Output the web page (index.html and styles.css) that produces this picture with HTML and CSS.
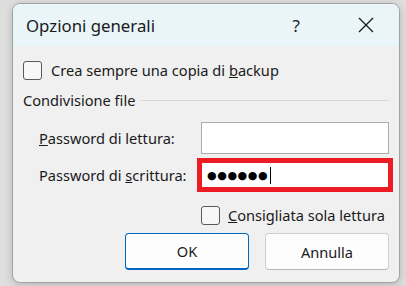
FILE: index.html
```
<!DOCTYPE html>
<html lang="it">
<head>
  <meta charset="UTF-8" />
  <title>Opzioni generali</title>
  <link rel="stylesheet" href="styles.css">
</head>
<body>
  <div class="dialog">
    <!-- Title bar -->
    <div class="titlebar">
      <span class="title">Opzioni generali</span>
      <span class="help">?</span>
      <svg class="close" width="16" height="16" viewBox="0 0 16 16">
        <path d="M1 1 L15 15 M15 1 L1 15" stroke="#1a1a1a" stroke-width="1.3" fill="none" />
      </svg>
    </div>

    <div class="content">
      <label class="check-row">
        <span class="checkbox"></span>
        <span>Crea sempre una copia di <u>b</u>ackup</span>
      </label>

      <div class="group-title">
        <span>Condivisione file</span>
        <span class="group-line"></span>
      </div>

      <div class="field-row">
        <span class="field-label"><u>P</u>assword di lettura:</span>
        <span class="field"></span>
      </div>

      <div class="field-row second">
        <span class="field-label">Password di <u>s</u>crittura:</span>
        <span class="field marked">
          <span class="dots">&#9679;&#9679;&#9679;&#9679;&#9679;&#9679;</span><span class="caret"></span>
        </span>
      </div>

      <label class="check-row readonly">
        <span class="checkbox"></span>
        <span><u>C</u>onsigliata sola lettura</span>
      </label>

      <div class="buttons">
        <button class="btn primary">OK</button>
        <button class="btn">Annulla</button>
      </div>
    </div>
  </div>
</body>
</html>
```

FILE: styles.css
```
body, html {
  margin: 0; padding: 0; height: 100%;
  font-family: 'Noto Sans', 'Open Sans', sans-serif;
  color: #1a1a1a;
  background: #dedede;
  overflow: hidden;
}
body {
  padding: 3px 0 0 12px;
  box-sizing: border-box;
}

.dialog {
  width: 388px;
  height: 280px;
  box-sizing: border-box;
  border: 1px solid #a3a3a3;
  border-radius: 8px;
  background: #f0f0f0;
  box-shadow: 0 2px 8px rgba(0, 0, 0, 0.18);
  overflow: hidden;
}

/* Title bar */
.titlebar {
  height: 42px;
  display: flex;
  align-items: center;
  background: #e9f5f8;
}
.title {
  margin-left: 13px;
  font-size: 16.8px;
  flex: 1;
}
.help {
  font-size: 17px;
  margin-right: 58px;
  color: #222;
}
.close {
  margin-right: 25px;
}

/* Body */
.content {
  padding: 0 10px;
  font-size: 14.6px;
}
.check-row {
  display: flex;
  align-items: center;
  gap: 9px;
  margin-top: 14px;
}
.checkbox {
  width: 17px;
  height: 17px;
  border: 1px solid #5a5a5a;
  border-radius: 3px;
  background: #f7f7f7;
}
.group-title {
  display: flex;
  align-items: center;
  gap: 6px;
  margin-top: 10px;
}
.group-line {
  flex: 1;
  height: 1px;
  background: #d9d9d9;
}

.field-row {
  display: flex;
  align-items: center;
  margin-top: 12px;
  padding-left: 16px;
}
.field-row.second {
  margin-top: 4px;
}
.field-label {
  flex: 1;
}
.field {
  width: 188px;
  height: 32px;
  box-sizing: border-box;
  border: 1px solid #adadad;
  background: #fff;
  display: flex;
  align-items: center;
}
.field.marked {
  width: 196px;
  height: 34px;
  margin-right: -4px;
  border: 5px solid #ec1c24;
  padding-left: 5px;
}
.dots {
  font-family: 'DejaVu Sans', sans-serif;
  font-size: 11px;
  letter-spacing: 0.6px;
  color: #000;
}
.caret {
  width: 1px;
  height: 17px;
  background: #000;
  margin-left: 2px;
}

.check-row.readonly {
  margin-top: 13px;
  margin-left: 178px;
  gap: 8px;
}

.buttons {
  display: flex;
  justify-content: flex-end;
  gap: 16px;
  margin-top: 8px;
}
.btn {
  width: 124px;
  height: 37px;
  font-family: inherit;
  font-size: 14.6px;
  color: #1a1a1a;
  background: #fdfdfd;
  border: 1px solid #d0d0d0;
  border-bottom-color: #b8b8b8;
  border-radius: 4px;
}
.btn.primary {
  border: 1px solid #0067c0;
  border-bottom-width: 2px;
}
```
